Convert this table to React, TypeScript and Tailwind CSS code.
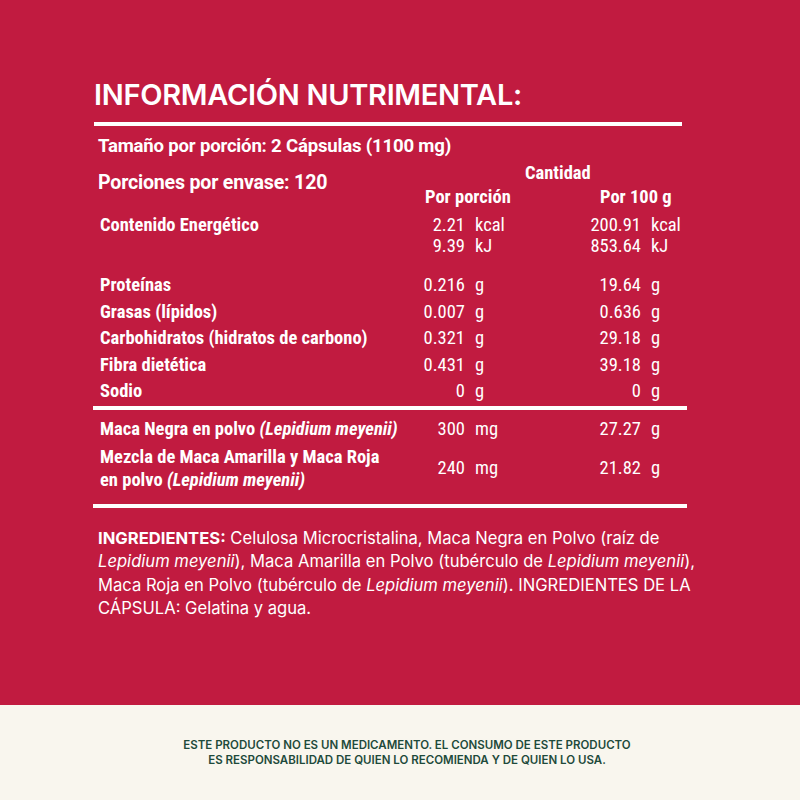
const narrow = "font-['Liberation_Sans_Narrow','Roboto_Condensed',Roboto,sans-serif]";
const cols = 'grid grid-cols-[306px_59px_85px_91px_1fr]';

type Row = { label: React.ReactNode; v1: string; u1: string; v2: string; u2: string };

const nutrients: Row[] = [
  { label: 'Proteínas', v1: '0.216', u1: 'g', v2: '19.64', u2: 'g' },
  { label: 'Grasas (lípidos)', v1: '0.007', u1: 'g', v2: '0.636', u2: 'g' },
  { label: 'Carbohidratos (hidratos de carbono)', v1: '0.321', u1: 'g', v2: '29.18', u2: 'g' },
  { label: 'Fibra dietética', v1: '0.431', u1: 'g', v2: '39.18', u2: 'g' },
  { label: 'Sodio', v1: '0', u1: 'g', v2: '0', u2: 'g' },
];

function ValueCells({ v1, u1, v2, u2 }: { v1: string; u1: string; v2: string; u2: string }) {
  return (
    <>
      <div className="text-right font-normal">{v1}</div>
      <div className="pl-[10px] font-normal">{u1}</div>
      <div className="text-right font-normal">{v2}</div>
      <div className="pl-[10px] font-normal">{u2}</div>
    </>
  );
}

export default function App() {
  return (
    <div className="flex h-[800px] w-[800px] flex-col bg-[#f9f6ee]">
      <div className="h-[705px] bg-[#c11b40] pl-[94px] pt-[77px] text-white">
        <div className="w-[588px]">
          <h1 className="font-['Inter',sans-serif] text-[29px] font-semibold leading-[35px] tracking-[-0.3px]">
            INFORMACIÓN NUTRIMENTAL:
          </h1>
          <div className="mt-[10px] h-[4px] bg-white" />

          <div className={`${narrow} text-[18.5px] font-bold`}>
            <div className="mt-[8px] whitespace-nowrap pl-[4px] font-['Roboto',sans-serif] text-[18.6px] leading-[24px] tracking-[-0.2px]">
              Tamaño por porción: 2 Cápsulas (1100 mg)
            </div>

            <div className="flex whitespace-nowrap">
              <div className="w-[330px] pl-[4px] pt-[13px] font-['Roboto',sans-serif] text-[19.6px] leading-[24px] tracking-[-0.2px]">
                Porciones por envase: 120
              </div>
              <div className="flex w-[258px] flex-col">
                <div className="pt-[3px] pl-[101px] leading-[24px]">Cantidad</div>
                <div className="flex leading-[24px]">
                  <div className="w-[176px] pl-[1px]">Por porción</div>
                  <div>Por 100 g</div>
                </div>
              </div>
            </div>

            <div className={`mt-[6px] ${cols} whitespace-nowrap pl-[6px] leading-[21px]`}>
              <div className="font-bold">Contenido Energético</div>
              <ValueCells v1="2.21" u1="kcal" v2="200.91" u2="kcal" />
              <div />
              <ValueCells v1="9.39" u1="kJ" v2="853.64" u2="kJ" />
            </div>

            <div className="mt-[18px] flex flex-col gap-[5px] whitespace-nowrap pl-[6px]">
              {nutrients.map((r, i) => (
                <div key={i} className={`${cols} leading-[21.5px]`}>
                  <div className="font-bold">{r.label}</div>
                  <ValueCells {...r} />
                </div>
              ))}
            </div>

            <div className="-ml-[1px] mt-[3px] h-[4px] w-[594px] bg-white" />

            <div className="mt-[8px] flex flex-col gap-[5px] whitespace-nowrap pl-[6px] leading-[23px]">
              <div className={cols}>
                <div className="font-bold">
                  Maca Negra en polvo <i>(Lepidium meyenii)</i>
                </div>
                <ValueCells v1="300" u1="mg" v2="27.27" u2="g" />
              </div>
              <div className={`${cols} items-center`}>
                <div className="font-bold">
                  Mezcla de Maca Amarilla y Maca Roja
                  <br />
                  en polvo <i>(Lepidium meyenii)</i>
                </div>
                <ValueCells v1="240" u1="mg" v2="21.82" u2="g" />
              </div>
            </div>

            <div className="-ml-[1px] mt-[12px] h-[4px] w-[594px] bg-white" />
          </div>

          <p className="mt-[19px] w-[600px] whitespace-nowrap pl-[4px] font-['Inter',sans-serif] text-[16.6px] leading-[23.5px]">
            <span className="font-bold">INGREDIENTES:</span> Celulosa Microcristalina, Maca Negra en Polvo (raíz de
            <br />
            <i>Lepidium meyenii</i>), Maca Amarilla en Polvo (tubérculo de <i>Lepidium meyenii</i>),
            <br />
            Maca Roja en Polvo (tubérculo de <i>Lepidium meyenii</i>). INGREDIENTES DE LA
            <br />
            CÁPSULA: Gelatina y agua.
          </p>
        </div>
      </div>

      <div className="flex flex-1 flex-col items-center pl-[14px] pt-[33px] font-['Inter',sans-serif] text-[11.5px] font-semibold leading-[15px] text-[#1e4a3b]">
        <div>ESTE PRODUCTO NO ES UN MEDICAMENTO. EL CONSUMO DE ESTE PRODUCTO</div>
        <div>ES RESPONSABILIDAD DE QUIEN LO RECOMIENDA Y DE QUIEN LO USA.</div>
      </div>
    </div>
  );
}
